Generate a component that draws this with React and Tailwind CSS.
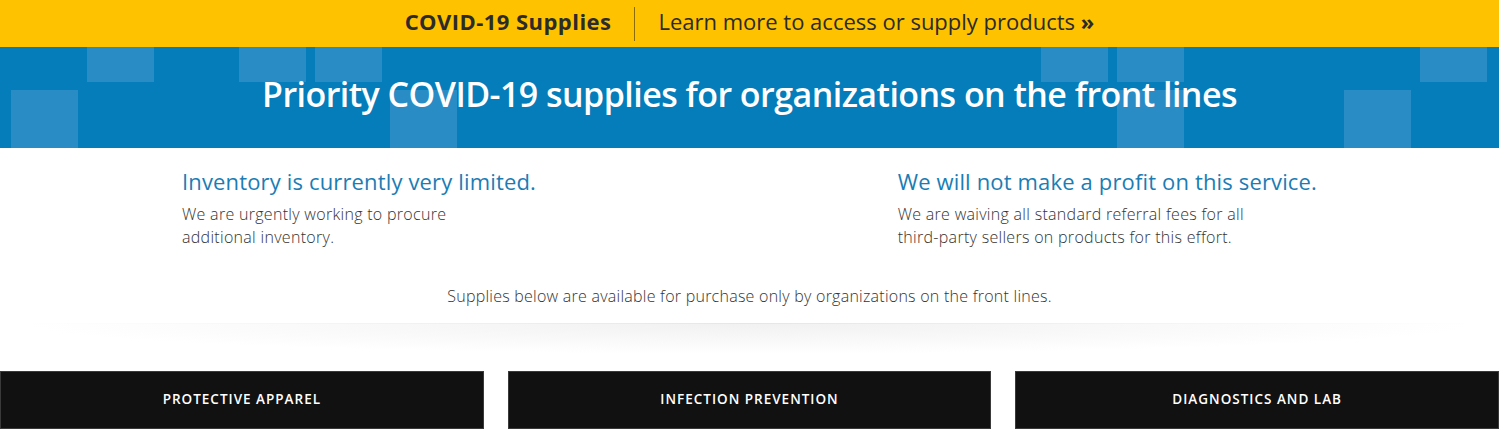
const squares = [
  { x: 87, y: -32, h: 67 },
  { x: 11, y: 43, h: 67 },
  { x: 239, y: -32, h: 67 },
  { x: 315, y: -32, h: 67 },
  { x: 390, y: 43, h: 67 },
  { x: 1041, y: -32, h: 67 },
  { x: 1117, y: -32, h: 67 },
  { x: 1117, y: 43, h: 67 },
  { x: 1344, y: 43, h: 67 },
  { x: 1420, y: -32, h: 67 },
];

function Banner() {
  return (
    <div className="relative h-[101px] overflow-hidden bg-[#047dba]">
      <svg className="absolute inset-0 h-full w-full" width="1499" height="101" aria-hidden="true">
        {squares.map((s, i) => (
          <rect key={i} x={s.x} y={s.y} width="67" height={s.h} fill="#2a8cc5" />
        ))}
      </svg>
      <h1 className="relative flex h-full items-center justify-center pb-[6px] text-[34px] font-semibold tracking-[-0.55px] text-white">
        Priority COVID-19 supplies for organizations on the front lines
      </h1>
    </div>
  );
}

function Note({ title, children, width }) {
  return (
    <div>
      <h2 className="text-[22px] leading-[28px] tracking-[0.15px] text-[#1b7db4]">{title}</h2>
      <p className={`mt-[8px] text-[16px] font-light leading-[23px] tracking-[0.3px] text-[#333] ${width}`}>
        {children}
      </p>
    </div>
  );
}

const tiles = ["Protective Apparel", "Infection Prevention", "Diagnostics and Lab"];

export default function App() {
  return (
    <div className="min-h-screen bg-white font-['Open_Sans',sans-serif]">
      <div className="flex h-[47px] items-center justify-center bg-[#fec200] pb-[4px] text-[22px] text-[#2b2b2b]">
        <span className="font-bold tracking-[0.45px]">COVID-19 Supplies</span>
        <span className="mx-[23px] mt-[4px] h-[34px] w-px bg-[#8a6b00]" />
        <span>
          Learn more to access or supply products <b>»</b>
        </span>
      </div>

      <Banner />

      <div className="flex justify-between px-[182px] pt-[19px]">
        <Note title="Inventory is currently very limited." width="w-[300px]">
          We are urgently working to procure additional inventory.
        </Note>
        <Note title="We will not make a profit on this service." width="w-[370px]">
          We are waiving all standard referral fees for all third-party sellers on products for this effort.
        </Note>
      </div>

      <p className="mt-[35px] text-center text-[16px] font-light tracking-[0.25px] text-[#333]">
        Supplies below are available for purchase only by organizations on the front lines.
      </p>

      <div className="mt-[15px] px-[20px]">
        <div className="h-px bg-gradient-to-r from-white via-[#e6e6e6] to-white" />
        <div className="h-[30px] bg-[radial-gradient(ellipse_at_top,_#f1f1f1_0%,_#ffffff_70%)]" />
      </div>

      <div className="mt-[17px] grid grid-cols-3 gap-[24px]">
        {tiles.map((t) => (
          <div
            key={t}
            className="flex h-[58px] items-start justify-center border border-[#3a3a3a] bg-[#111] pt-[17px] text-[13.5px] font-semibold uppercase tracking-[1px] text-white"
          >
            {t}
          </div>
        ))}
      </div>
    </div>
  );
}
